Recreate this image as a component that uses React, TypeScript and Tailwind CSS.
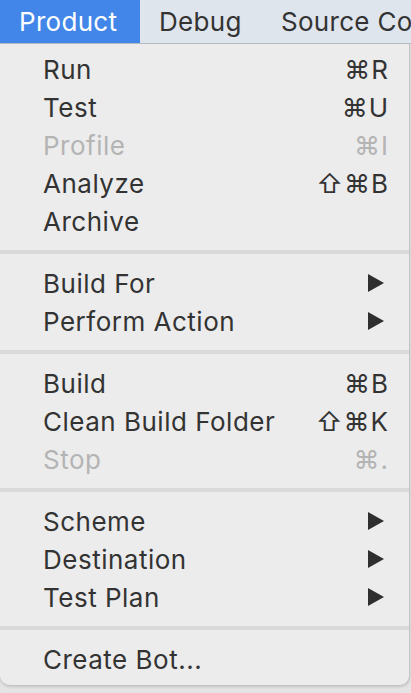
import React from 'react';

type Item =
  | { kind: 'item'; label: string; shortcut?: string; disabled?: boolean; submenu?: boolean }
  | { kind: 'sep' };

const items: Item[] = [
  { kind: 'item', label: 'Run', shortcut: '⌘R' },
  { kind: 'item', label: 'Test', shortcut: '⌘U' },
  { kind: 'item', label: 'Profile', shortcut: '⌘I', disabled: true },
  { kind: 'item', label: 'Analyze', shortcut: '⇧⌘B' },
  { kind: 'item', label: 'Archive' },
  { kind: 'sep' },
  { kind: 'item', label: 'Build For', submenu: true },
  { kind: 'item', label: 'Perform Action', submenu: true },
  { kind: 'sep' },
  { kind: 'item', label: 'Build', shortcut: '⌘B' },
  { kind: 'item', label: 'Clean Build Folder', shortcut: '⇧⌘K' },
  { kind: 'item', label: 'Stop', shortcut: '⌘.', disabled: true },
  { kind: 'sep' },
  { kind: 'item', label: 'Scheme', submenu: true },
  { kind: 'item', label: 'Destination', submenu: true },
  { kind: 'item', label: 'Test Plan', submenu: true },
  { kind: 'sep' },
  { kind: 'item', label: 'Create Bot...' },
];

const Arrow = () => (
  <svg width="18" height="18" viewBox="0 0 18 18" className="mr-[4px]">
    <path d="M1 0 L17 9 L1 18 Z" fill="#2f2f2f" />
  </svg>
);

export default function App() {
  return (
    <div
      className="w-[411px] h-[693px] overflow-hidden bg-[#e4e4e4] text-[#333333]"
      style={{ fontFamily: 'Inter, "Liberation Sans", "DejaVu Sans", sans-serif' }}
    >
      {/* menu bar */}
      <div className="h-[44px] flex items-stretch bg-[#dfe5ec] border-b border-[#b9bec4] text-[26px] tracking-[0.3px] whitespace-nowrap">
        <div className="w-[140px] shrink-0 bg-[#4286e9] text-white flex items-center pl-[19px]">Product</div>
        <div className="w-[141px] shrink-0 flex items-center pl-[19px]">Debug</div>
        <div className="shrink-0 flex items-center">Source Control</div>
      </div>

      {/* dropdown */}
      <div className="w-[410px] h-[642px] bg-[#ececec] border-r border-b border-[#c4c4c4] rounded-br-[10px] rounded-bl-[10px] pt-[6px] pb-[9px] shadow-[0_1px_3px_rgba(0,0,0,0.15)]">
        {items.map((it, i) =>
          it.kind === 'sep' ? (
            <div key={i} className="h-[24px] flex items-center">
              <div className="h-[4px] w-full bg-[#dadada]" />
            </div>
          ) : (
            <div
              key={i}
              className={
                'h-[38px] flex items-center justify-between pl-[43px] pr-[20px] text-[26px] ' +
                (it.disabled ? 'text-[#b4b4b4]' : 'text-[#333333]')
              }
            >
              <span className="tracking-[0.5px]">{it.label}</span>
              {it.shortcut && <span className="tracking-[1px]">{it.shortcut}</span>}
              {it.submenu && <Arrow />}
            </div>
          )
        )}
      </div>
    </div>
  );
}
